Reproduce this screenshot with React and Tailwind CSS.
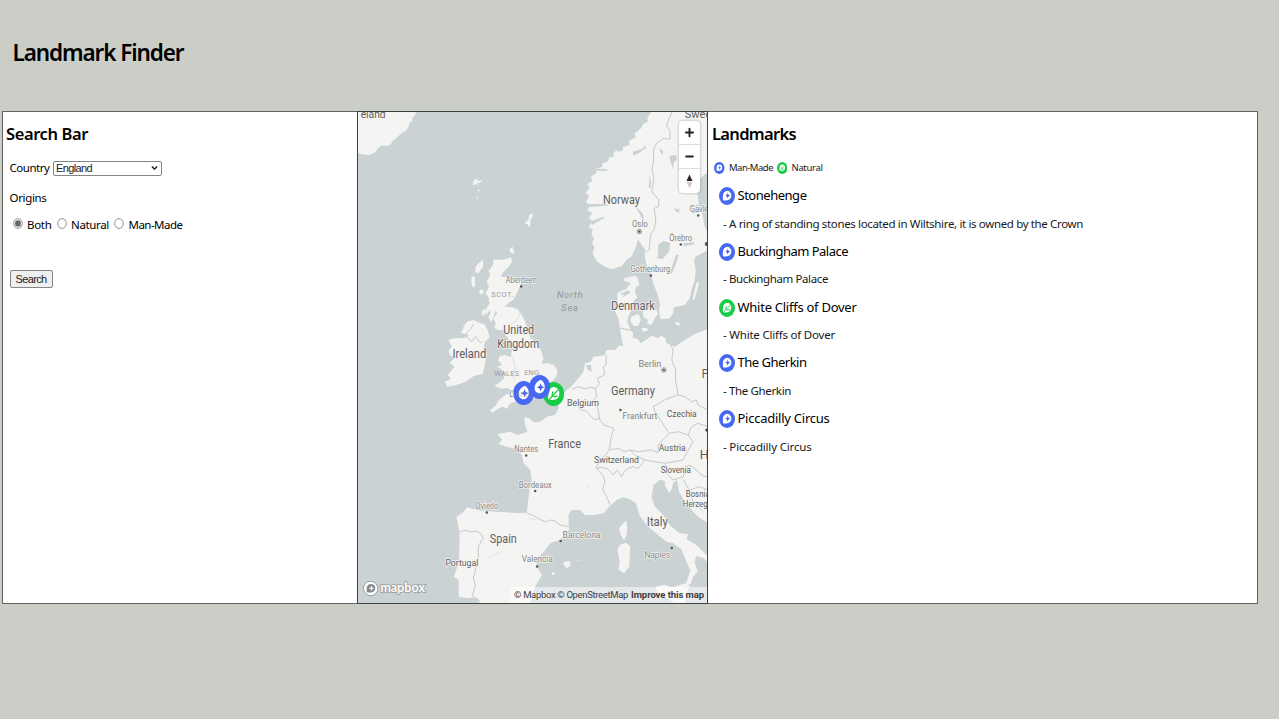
import { useLayoutEffect, useRef } from 'react';

function Fit({ w, className = '', children }) {
  const ref = useRef(null);
  useLayoutEffect(() => {
    const el = ref.current;
    el.style.letterSpacing = '0px';
    const gap = (w - el.getBoundingClientRect().width) / el.textContent.length;
    el.style.letterSpacing = `${gap}px`;
  }, [w]);
  return <span ref={ref} className={`inline-block whitespace-nowrap ${className}`}>{children}</span>;
}

function MarkerArt({ natural }) {
  return (
    <>
      <circle cx="12" cy="12" r="12" fill={natural ? '#17cd45' : '#4668f2'} />
      <path d="M6 17.700C5.600 15.500 5.600 13.300 6 11.500A6.300 6.300 0 1 1 12.500 17.700C10 18.200 8 18.100 6 17.700z" fill="#fff" />
      {natural ? (
        <path d="M6 18.500 18.500 6.500M10 14l1-4.500M11.500 14.800l5-.8" stroke="#17cd45" strokeWidth="1.300" fill="none" />
      ) : (
        <path d="m13 7.600 1.200 2.700 2.700 1.200-2.700 1.200-1.200 2.700-1.200-2.700-2.700-1.200 2.700-1.200z" fill="#4668f2" />
      )}
    </>
  );
}

function PinArt({ natural }) {
  if (natural) return <MarkerArt natural />;
  return (
    <>
      <circle cx="12" cy="12" r="12" fill="#4668f2" />
      <path d="M13.500 4.800C16.500 6.500 18 9 17.800 12.300 17.600 15.800 15 18.300 11.800 18.300 8.500 18.300 6 16 6.200 12.800 6.500 9 9.500 6 13.500 4.800z" fill="#fff" />
      <path d="m13 8 1.300 3 3 1.300-3 1.300-1.300 3-1.300-3-3-1.300 3-1.300z" fill="#4668f2" />
    </>
  );
}

function Marker({ natural, className }) {
  return (
    <svg viewBox="0 0 24 24" preserveAspectRatio="none" className={`shrink-0 ${className}`}>
      <MarkerArt natural={natural} />
    </svg>
  );
}

const countries = [
  ['Norway', 603, 204.500, 37, 12],
  ['Denmark', 611, 310, 44, 12],
  ['United', 503, 334.500, 31, 12],
  ['Kingdom', 497, 348.500, 42, 12],
  ['Ireland', 452, 358, 34, 12],
  ['Germany', 611, 395.500, 44, 12],
  ['France', 548, 448, 33, 12],
  ['Spain', 489.500, 543.500, 27, 12],
  ['Italy', 647, 526.500, 21, 12],
  ['eland', 360, 118.500, 25, 10.500],
  ['Swed', 685, 118.500, 27, 11],
  ['P', 702, 378, 7, 12],
  ['H', 700, 459.500, 9, 12],
  ['Belgium', 567, 406.500, 32, 9.500],
  ['Czechia', 667, 417.500, 30, 9.500],
  ['Austria', 659, 451.500, 27, 9.500],
  ['Switzerland', 594, 463.500, 45, 9.500],
  ['Slovenia', 661, 473, 30, 9],
  ['Bosnia', 686, 497.500, 24, 9],
  ['Herzeg', 683, 507.500, 25, 9],
  ['Portugal', 445, 566.500, 33, 9.500],
];

const cities = [
  ['Oslo', 632, 227.500, 16, 639.500, 231.500],
  ['Gävle', 690, 212, 19, 698.500, 215.500],
  ['Örebro', 669.500, 241.500, 23, 681, 244.500],
  ['Gothenburg', 630.500, 272.500, 40, 651, 275.500],
  ['Aberdeen', 505.500, 283.500, 31, 521, 286.500],
  ['Berlin', 638.500, 367.500, 23, 664, 370],
  ['Frankfurt', 622.500, 419.500, 35, 620.500, 410],
  ['Nantes', 514, 452.500, 24, 526, 455.500],
  ['Bordeaux', 518.500, 488, 33, 535, 491],
  ['Oviedo', 475, 509.500, 23, 486.500, 512.500],
  ['Barcelona', 562.500, 538.500, 38, 560.500, 541],
  ['Valencia', 521.500, 562.500, 31, 537, 566.500],
  ['Naples', 644.500, 558, 26, 672, 548],
  ['London', 509, 397, 26, 530, 392],
];

function EuropeMap() {
  return (
    <svg viewBox="357.300 112 350 491" preserveAspectRatio="none" className="block h-full w-full bg-[#cad2d3]" fontFamily="Roboto, sans-serif">
      <g fill="#f4f4f3" strokeLinejoin="round">
        <path d="M357 112H415.500L414 116 411.500 117.500 412 121 409 123 408 127 405 131 401 133 397 137 392 141 390 144.500 386 146 381 145.500 377 148.500 374 152.500 369 155 362 154.500 357 153z" />
        <g transform="translate(358 110) scale(.33333)">
          <path d="M345 212l12-6 2 8 14-5-9 10-6-2 2 10-8-6-9 6zM360 238l5 6-7-1zM356 257l4 7-5 2zM524 308l-1 12-6 9-1 19-6 2-1-8-8 1 2-10 8-2 1-14zM454 416l10-6 0 10 6 3-6 8-8-4zM372 450l3 10-9 18-8 11-8-2 2-18 14-14z" />
        </g>
        <g transform="translate(430 250) scale(.33333)">
          <path d="M190 28 215 30 243 22 245 36 235 50 218 68 212 80 235 82 265 84 274 95 270 105 262 125 250 148 235 160 222 170 245 172 262 178 275 195 285 215 292 240 300 262 318 280 332 300 340 325 335 342 350 339 372 345 382 360 378 380 362 398 345 405 365 410 375 415 372 425 355 435 330 440 305 447 290 454 272 450 252 455 238 462 230 477 218 470 203 476 187 488 177 482 195 468 206 450 225 435 248 428 262 416 245 420 230 414 212 416 192 408 207 398 222 385 222 365 212 357 200 350 215 345 204 332 208 318 225 315 242 322 243 310 248 290 238 270 225 255 228 240 205 241 192 235 196 220 190 205 201 190 195 181 191 200 183 216 174 202 180 190 180 178 168 195 165 180 178 160 174 142 166 128 176 110 169 95 180 75 175 62 188 45zM155 32l4 17-15 21-8-9 8-20zM124 78l10 4 0 26-8 4-3-18zM150 118l12 5-8 11-8-6zM158 178l9 3-6 16-8-5z" />
          <path d="M100 228 112 214 130 211 150 220 162 222 173 242 178 262 164 275 160 290 169 312 165 340 157 372 130 378 105 396 75 406 50 410 44 395 62 386 52 376 72 350 58 338 75 322 58 316 55 300 65 290 54 270 75 264 100 265 115 255 90 248 98 238z" />
        </g>
        <g transform="translate(530 110) scale(.33333)">
          <path d="M365 5 352 25 355 33 338 44 334 55 314 70 318 82 297 92 299 105 280 110 278 122 255 127 252 140 238 142 234 154 218 160 216 172 196 176 200 188 182 200 188 213 173 220 178 235 166 248 178 258 168 276 180 288 171 300 186 308 176 325 188 334 176 350 188 358 184 375 192 385 186 400 194 412 187 430 202 455 225 470 245 478 275 468 290 450 306 438 318 410 324 388 332 400 345 420 345 440 350 465 365 495 370 520 382 550 390 580 388 605 392 628 420 625 430 610 432 592 465 585 480 565 485 540 495 510 498 480 493 455 497 440 520 428 540 416V380l-15-30-5-30-12-30-5-45 8-40 29-22V0z" />
          <path d="M250 128l11-9 2 12-12 8zM221 165l12-5-4 11zM299 96l16-8-5 12zM281 505l35-8 8 8 4 20-20 15-4-20-22-8z" opacity=".9" />
        </g>
        <g transform="translate(570 250) scale(.33333)">
          <path d="M142 130 155 122 168 118 185 96 197 79 201 95 195 125 202 142 190 155 185 180 175 200 172 215 180 235 190 250 188 263 205 268 212 280 228 270 245 257 265 265 272 257 286 263 290 280 303 285 315 290 345 270 380 250 417 236V820L390 804 370 785 347 757 328 727 322 690 310 700 305 720 297 728 286 708 285 692 270 690 251 705 245 740 255 770 280 795 300 826 320 842 330 850 355 853 350 868 380 885 405 910 417 918V940L402 925 380 918 374 935 384 965 370 980 363 1002 348 1005 362 960 352 940 335 898 310 880 290 875 265 855 235 830 210 798 198 760 180 748 160 742 140 750 120 768 100 790 75 795 45 795 30 780 5 780-5 795-3 840-30 870-60 880-75 900-100 930-100 950-85 975-105 1010-120 1062H-270L-285 1042-310 1045-335 1040-335 990-350 980-335 940-332 850-342 800-325 790-310 772-270 782-220 785-150 790-130 788-122 715-115 690-120 660-140 640-145 615-160 598-190 590-215 583-205 570-218 552-180 545-158 555-128 545-135 525-138 502-123 505-110 517-90 515-70 500-45 495-35 475-38 450-10 420 5 408 25 385 40 365 45 340 62 335 70 320 105 316 109 300 135 300 150 285 160 290 155 265 150 235 145 205 133 180 142 155z" />
          <path d="M183 200l22-9 8 16-7 20-15 1-9-14zM218 185l22-13 11 7 8-3 5 17-11 15-7 16-14-2 2-13-13-7zM215 234l15 0 8 7-20 4zM317 214l13 5-2 10-10-6zM380 98l8-2-4 20-9 30-7 4z" />
        </g>
        <g transform="translate(570 400) scale(.33333)">
          <path d="M168 361l4 20-2 25-8 15-11-20-3-17zM150 435l18-7 13 10-3 62-15 20-17-10 3-25-7-35zM258 560l25-6 25 8 40-12 12 8-10 22-6 32h-25l-58-36z" />
          <path d="M-22 490l13-7 11 3-4 15-10 3zM-53 516l7 2-4 8-7-4zM20 482l10-3-3 4z" />
        </g>
      </g>
      <g fill="#cad2d3">
        <g transform="translate(530 110) scale(.33333)">
          <path d="M385 405l15-12 21 5-2 24-21 26-16-4 3-16zM447 434l-8 27-13 30-4-4 10-35 7-17zM387 114l12 8 2 11-7-2zM419 138l20-4 2 17-8 4-3 22-9-25zM357 195l7 18-2 23-6-6 3-17zM432 293l9 5 8-2-1 12-8-1zM315 285l25 28 2 22-8-14zM460 400l30-4 5 7-33 6zM308 125l30-9 8-10 3 7-18 14-20 10zM170 282l60 0 4 5-58 4zM185 333l35-13 4 3-39 23zM195 176l35 1 4 5-38 0zM480 300l30-6 0 12-22 5z" />
        </g>
        <g transform="translate(570 250) scale(.33333)">
          <path d="M150 132l25-12 6 8-26 16 8-10zM48 345l15 0 2 20-12-6z" />
        </g>
      </g>
      <g fill="none" stroke="#c6c7c8" strokeWidth="3" strokeLinejoin="round">
        <g transform="translate(530 110) scale(.33333)">
          <path d="M430 0 418 25 410 48 420 60 421 87 400 86 382 98 370 120 372 150 366 180 372 205 366 245 387 270 386 290 373 295 378 330 374 355 362 375 358 420 350 425 335 412" />
        </g>
        <g transform="translate(430 250) scale(.33333)">
          <path d="M130 222 122 235 108 250 110 262 125 275 135 260 150 278 157 275" />
          <path d="M232 225 248 220 266 203 268 188M246 322 255 350 246 375 255 395" stroke="#dcdddd" />
        </g>
        <g transform="translate(570 250) scale(.33333)">
          <path d="M150 234 188 242M109 316 108 345 100 350 104 375 82 385 88 400 76 415 80 440 70 450 82 470 90 510M5 418 25 410 45 417 62 412 76 415M303 285 310 300 306 330 318 360 317 390 325 435 310 440 288 448 265 462 250 470 257 487 298 550M325 435 345 440 365 455 380 450 385 465 415 480" />
        </g>
        <g transform="translate(570 400) scale(.33333)">
          <path d="M-5 0 20 8 30 28 50 35 75 60 85 55 102 75 132 85 125 105 118 150 90 185 78 202 88 215 98 225 105 245 98 270 110 290 120 315M118 150 145 145 165 155 180 150 205 155 245 150 265 158 265 135 298 100 325 95 355 105 365 80 385 70 415 80M355 105 370 125 350 160 340 180 285 190 255 185 225 180 195 165 180 150M78 205 95 202 115 208 130 225 142 210 155 230 165 212 175 205 190 200 205 205 225 180M285 190 290 220 310 240 340 230 355 195 368 200 400 228 415 230M340 238 358 270 390 260 415 270M358 270 370 305 400 335" />
        </g>
        <path d="M526.500 513 532 515 537 518 541 520 546 522 550 520 555 521 560 525 569 526.500M459.500 532 465 530 470 532 476 531 481 534 483 538 478 546 478 556 476 566 473 578 475 585 472 596 480 601" strokeWidth="1" />
      </g>
      <g stroke="#e9eaea" fill="none" strokeWidth="1.500">
        <path d="M488 557 503 551M536 520 528 518M587 485 588 490" />
      </g>
      <g stroke="#f4f4f3" strokeWidth="1.500" paintOrder="stroke" strokeLinejoin="round">
        <g fill="#868686" fontSize="9">
          {cities.map(([t, x, y, w]) => (
            <text key={t} x={x} y={y} textLength={w} lengthAdjust="spacingAndGlyphs">{t}</text>
          ))}
        </g>
        <g fill="#5f6061">
          {countries.map(([t, x, y, w, s]) => (
            <text key={t} x={x} y={y} fontSize={s} textLength={w} lengthAdjust="spacingAndGlyphs">{t}</text>
          ))}
        </g>
      </g>
      {cities.slice(0, 13).map(([t, , , , x, y]) => (
        <g key={t}>
          {(t === 'Oslo' || t === 'Berlin') && <circle cx={x} cy={y} r="2.300" fill="none" stroke="#777" strokeWidth=".7" />}
          <circle cx={x} cy={y} r="1.250" fill="#555" />
        </g>
      ))}
      <g fill="#9a9d9e" fontSize="7.500">
        <text x="491" y="297" textLength="22">SCOT.</text>
        <text x="494" y="376" textLength="25">WALES</text>
        <text x="524" y="375" textLength="17">ENG.</text>
        <g fill="#8d999e" fontStyle="italic" fontSize="9.500">
          <text x="556.500" y="298.500" textLength="26">North</text>
          <text x="561" y="311.500" textLength="17">Sea</text>
        </g>
      </g>
      <circle cx="707" cy="244" r="2" fill="#555" />
      <circle cx="707" cy="430" r="1.500" fill="#444" />
      <svg x="543" y="382" width="21" height="24" viewBox="0 0 24 24" preserveAspectRatio="none"><PinArt natural /></svg>
      <svg x="513" y="381" width="21" height="24" viewBox="0 0 24 24" preserveAspectRatio="none"><PinArt /></svg>
      <text x="515" y="397" fontSize="9" fill="#868686" opacity=".45" textLength="15" lengthAdjust="spacingAndGlyphs">ond</text>
      <svg x="529" y="375" width="21" height="24" viewBox="0 0 24 24" preserveAspectRatio="none"><PinArt /></svg>
      <g>
        <circle cx="370" cy="588.500" r="7.200" fill="#fff" stroke="#979d9f" strokeWidth="1" />
        <path d="M366 592.500v-4.200a4.300 4.300 0 1 1 4.300 4.200z" fill="#858b8d" />
        <path d="m370.800 585.500.8 2 2 .8-2 .8-.8 2-.8-2-2-.8 2-.8z" fill="#fff" />
        <text x="379.500" y="592.500" fontFamily="Lato, sans-serif" fontWeight="700" fontSize="12.500" textLength="45" lengthAdjust="spacingAndGlyphs" fill="#fff" stroke="#969c9e" strokeWidth="1.600" paintOrder="stroke">mapbox</text>
      </g>
    </svg>
  );
}

function MapControls() {
  return (
    <div className="absolute top-[8.500px] right-[7.500px] flex h-[72px] w-[21px] flex-col divide-y divide-[#ddd] rounded-[4px] bg-white shadow-[0_0_0_1.5px_rgba(0,0,0,0.1)]">
      <svg viewBox="0 0 21 24" className="h-6 w-full"><path d="M10.500 8v8M6.800 12h7.400" stroke="#222" strokeWidth="2" strokeLinecap="round" /></svg>
      <svg viewBox="0 0 21 24" className="h-6 w-full"><path d="M7 12h7" stroke="#222" strokeWidth="2" strokeLinecap="round" /></svg>
      <svg viewBox="0 0 21 24" className="h-6 w-full"><path d="m10.500 5.500 3 6.500h-6z" fill="#222" /><path d="m10.500 19.500 3-6.500h-6z" fill="#ccc" /></svg>
    </div>
  );
}

const landmarks = [
  ['Stonehenge', 69, 'A ring of standing stones located in Wiltshire, it is owned by the Crown', 360],
  ['Buckingham Palace', 110.500, 'Buckingham Palace', 105],
  ['White Cliffs of Dover', 119, 'White Cliffs of Dover', 112],
  ['The Gherkin', 69, 'The Gherkin', 68],
  ['Piccadilly Circus', 92, 'Piccadilly Circus', 88.500],
];

export default function App() {
  return (
    <div className="h-[720px] w-[1280px] overflow-hidden bg-white font-['Noto_Sans',sans-serif] text-black">
      <div className="h-[719px] w-[1279px] bg-[#cbcec7]">
        <header className="flex h-[111px] items-start pt-[35px] pl-[12.500px]">
          <h1 className="text-[22.500px] leading-[36px] font-semibold"><Fit w={171}>Landmark Finder</Fit></h1>
        </header>
        <main className="ml-[2px] flex h-[493px] w-[1256px]">
          <section className="w-[355px] border border-r-0 border-[#62655f] bg-white pl-[3px]">
            <h2 className="mt-[9px] text-[16.500px] leading-[26px] font-semibold"><Fit w={82}>Search Bar</Fit></h2>
            <div className="pl-[3.500px] text-[11.500px] leading-[18px]">
              <div className="mt-[12px] flex items-center">
                <Fit w={40} className="mr-[3.500px]">Country</Fit>
                <div className="flex h-[15px] w-[109px] items-center justify-between rounded-[2px] border border-[#858585] bg-white pr-[3px] pl-[2px] font-['Liberation_Sans',sans-serif] text-[11px] leading-[13px] text-[#222]">
                  <Fit w={36}>England</Fit>
                  <svg viewBox="0 0 8 6" className="h-[6px] w-[7px]"><path d="m1 1.300 3 3 3-3" fill="none" stroke="#111" strokeWidth="1.500" /></svg>
                </div>
              </div>
              <div className="mt-[12px]"><Fit w={37}>Origins</Fit></div>
              <div className="mt-[9px] flex items-center pl-[3px]">
                <svg viewBox="0 0 10 11" className="mb-[3px] h-[11px] w-[10px]"><ellipse cx="5" cy="5.500" rx="4.300" ry="4.900" fill="#fff" stroke="#777" strokeWidth=".8" /><ellipse cx="5" cy="5.500" rx="2.900" ry="3.300" fill="#686868" /></svg>
                <Fit w={24.500} className="ml-[4.500px]">Both</Fit>
                <svg viewBox="0 0 10 11" className="mb-[3px] ml-[5px] h-[11px] w-[10px]"><ellipse cx="5" cy="5.500" rx="4.300" ry="4.900" fill="#fff" stroke="#777" strokeWidth=".8" /></svg>
                <Fit w={38} className="ml-[4.500px]">Natural</Fit>
                <svg viewBox="0 0 10 11" className="mb-[3px] ml-[5px] h-[11px] w-[10px]"><ellipse cx="5" cy="5.500" rx="4.300" ry="4.900" fill="#fff" stroke="#777" strokeWidth=".8" /></svg>
                <Fit w={54} className="ml-[4.500px]">Man-Made</Fit>
              </div>
              <button className="mt-[36px] flex h-[18px] w-[43px] items-center justify-center rounded-[2px] border border-[#858585] bg-[#efefef] font-['Liberation_Sans',sans-serif] text-[11px] text-[#222]"><Fit w={31}>Search</Fit></button>
            </div>
          </section>

          <section className="relative w-[351px] border border-[#3f4243] bg-[#cad2d3]">
            <EuropeMap />
            <MapControls />
            <div className="absolute right-0 bottom-0 flex h-[16px] items-center bg-white/50 pr-[3px] pl-[4px] font-['Roboto',sans-serif] text-[9.500px] text-[#3f4041]">
              <Fit w={114} className="mr-[3px]">© Mapbox © OpenStreetMap</Fit>
              <Fit w={73} className="font-bold">Improve this map</Fit>
            </div>
          </section>

          <section className="w-[550px] border border-l-0 border-[#62655f] bg-white pl-[4px]">
            <h2 className="mt-[9px] text-[16.500px] leading-[26px] font-semibold"><Fit w={84}>Landmarks</Fit></h2>
            <div className="mt-[12px] flex h-[18px] items-center pl-[2px] text-[9.500px] leading-[18px] text-[#222]">
              <Marker className="h-[12px] w-[10.500px]" />
              <Fit w={44} className="ml-[4.500px]">Man-Made</Fit>
              <Marker natural className="ml-[3.500px] h-[12px] w-[10.500px]" />
              <Fit w={31} className="ml-[4.500px]">Natural</Fit>
            </div>
            <div className="pt-[4.500px]">
              {landmarks.map(([name, nameWidth, text, textWidth]) => (
                <article key={name} className="h-[55.800px]">
                  <h3 className="flex h-[27px] items-center pl-[6.500px] text-[13px] leading-[26px]">
                    <Marker natural={name.startsWith('White')} className="mt-[2px] h-[18px] w-[16px]" />
                    <Fit w={nameWidth} className="ml-[3px]">{name}</Fit>
                  </h3>
                  <p className="mt-[2px] pl-[11px] text-[11.500px] leading-[25px] text-[#181818]"><Fit w={textWidth}>- {text}</Fit></p>
                </article>
              ))}
            </div>
          </section>
        </main>
      </div>
    </div>
  );
}
